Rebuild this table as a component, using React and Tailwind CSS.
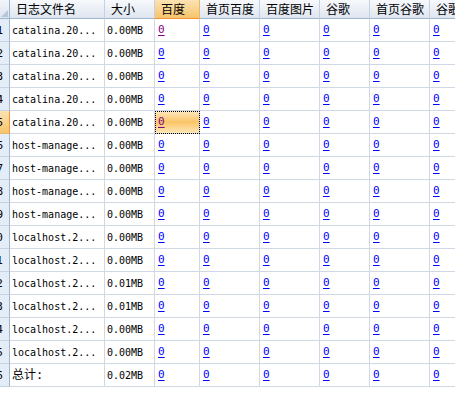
import React from 'react';

const cols = [
    { label: '', w: 'w-[10px]' },
    { label: '日志文件名', w: 'w-[95px]' },
    { label: '大小', w: 'w-[50px]' },
    { label: '百度', w: 'w-[45px]' },
    { label: '首页百度', w: 'w-[60px]' },
    { label: '百度图片', w: 'w-[60px]' },
    { label: '谷歌', w: 'w-[50px]' },
    { label: '首页谷歌', w: 'w-[60px]' },
    { label: '谷歌', w: 'w-[60px]' },
];

const rows = [
    ['catalina.20...', '0.00MB'],
    ['catalina.20...', '0.00MB'],
    ['catalina.20...', '0.00MB'],
    ['catalina.20...', '0.00MB'],
    ['catalina.20...', '0.00MB'],
    ['host-manage...', '0.00MB'],
    ['host-manage...', '0.00MB'],
    ['host-manage...', '0.00MB'],
    ['host-manage...', '0.00MB'],
    ['localhost.2...', '0.00MB'],
    ['localhost.2...', '0.00MB'],
    ['localhost.2...', '0.01MB'],
    ['localhost.2...', '0.01MB'],
    ['localhost.2...', '0.00MB'],
    ['localhost.2...', '0.00MB'],
    ['总计:', '0.02MB'],
];

const SELECTED_ROW = 4;

const mono = { fontFamily: '"DejaVu Sans Mono", "Noto Sans CJK SC", monospace' };

const Link = ({ visited }) => (
    <span className={`underline underline-offset-2 ${visited ? 'text-[#800080]' : 'text-[#0000ff]'}`}>0</span>
);

export default function App() {
    return (
        <div className="w-[455px] h-[393px] overflow-hidden bg-white" style={{ fontFamily: '"Noto Sans CJK SC", sans-serif' }}>
            {/* header */}
            <div className="flex h-[19px]">
                <div className="w-[10px] shrink-0 h-full border-r border-b border-[#9eb6ce] bg-gradient-to-b from-[#f3f6fb] to-[#dce4ef] relative">
                    <div className="absolute right-[1px] bottom-[1px] w-0 h-0 border-l-[7px] border-l-transparent border-b-[7px] border-b-[#b7c5d8]" />
                </div>
                {cols.slice(1).map((c, i) => (
                    <div
                        key={i}
                        className={`${c.w} shrink-0 h-full flex items-center pl-[6px] text-[12px] leading-none text-black whitespace-nowrap overflow-hidden border-r border-b
                            ${i === 2 ? 'bg-gradient-to-b from-[#fbe3b3] to-[#f6c46a] border-b-[#f29436] border-r-[#e8b86a]' : 'bg-gradient-to-b from-[#f7f9fc] to-[#dfe6f0] border-r-[#c5d1e1] border-b-[#9eb6ce]'}
                        `}
                    >
                        {c.label}
                    </div>
                ))}
            </div>

            {/* body */}
            {rows.map((r, ri) => {
                const sel = ri === SELECTED_ROW;
                const total = ri === rows.length - 1;
                return (
                    <div key={ri} className="flex h-[23px]">
                        <div
                            className={`w-[10px] shrink-0 h-full flex items-center justify-end pr-[6px] overflow-hidden text-[11px] leading-none border-r border-b whitespace-nowrap
                                ${sel ? 'bg-gradient-to-b from-[#fbe3b3] to-[#f6c46a] border-r-[#f29436] border-b-[#e8b86a]' : 'bg-[#e4ecf7] border-r-[#9eb6ce] border-b-[#c5d1e1]'}
                            `}
                            style={mono}
                        >
                            {ri + 1}
                        </div>
                        <div
                            className={`w-[95px] shrink-0 h-full flex items-center pl-[2px] whitespace-nowrap overflow-hidden border-r border-b border-[#d0d7e5] text-black ${total ? 'text-[12px]' : 'text-[10px]'}`}
                            style={mono}
                        >
                            {r[0]}
                        </div>
                        <div className="w-[50px] shrink-0 h-full flex items-center pl-[2px] text-[10px] text-black whitespace-nowrap border-r border-b border-[#d0d7e5]" style={mono}>
                            {r[1]}
                        </div>
                        {cols.slice(3).map((c, ci) => {
                            const active = sel && ci === 0;
                            return (
                                <div
                                    key={ci}
                                    className={`${c.w} shrink-0 h-full flex items-center pl-[3px] text-[11px] border-r border-b border-[#d0d7e5] ${active ? 'bg-[linear-gradient(to_bottom,#fde9c2,#fbc567_50%,#fde6b8)] outline outline-1 outline-dotted outline-black -outline-offset-1' : ''}`}
                                    style={mono}
                                >
                                    <Link visited={ci === 0 && (ri === 0 || sel)} />
                                </div>
                            );
                        })}
                    </div>
                );
            })}
        </div>
    );
}
